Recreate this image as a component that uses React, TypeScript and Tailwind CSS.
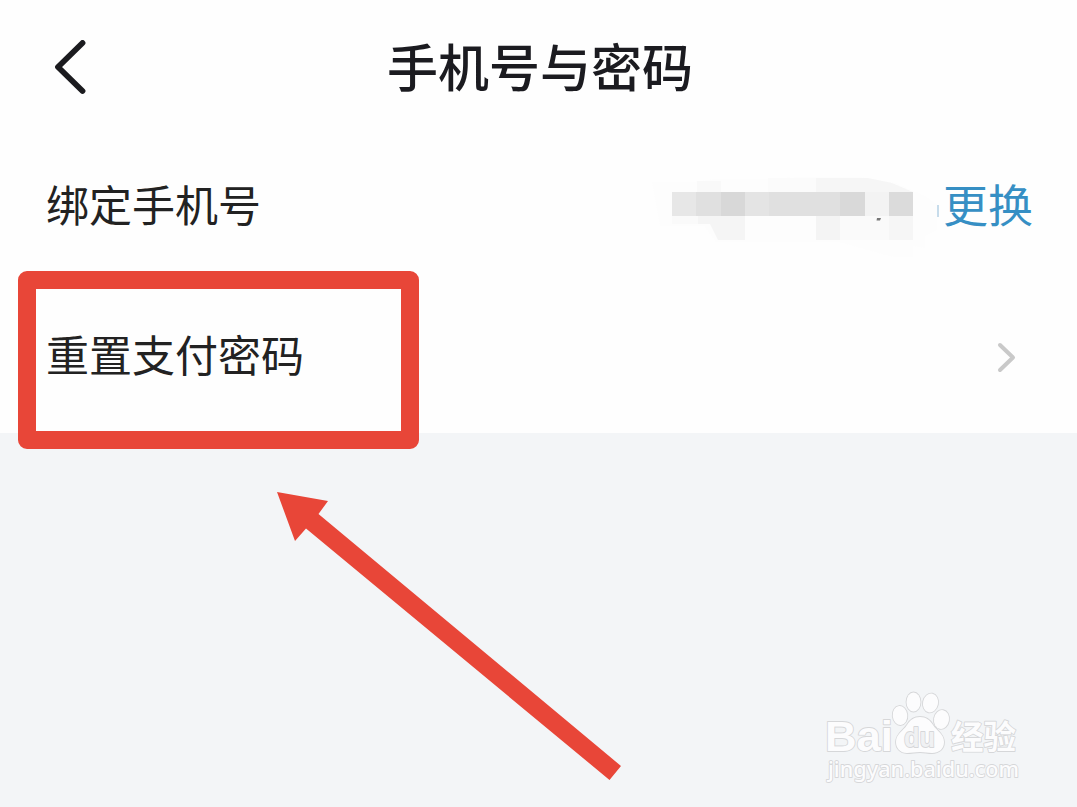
import type {ReactNode} from "react";

function BackIcon() {
  return (
    <svg className="w-8 h-14" viewBox="0 0 32 56" fill="none">
      <path d="M28.5 3 L4 27 L28.5 51" stroke="#1b1b1f" strokeWidth="5.8" strokeLinecap="round" strokeLinejoin="round" />
    </svg>
  );
}

function ForwardIcon() {
  return (
    <svg className="w-5 h-8" viewBox="0 0 20 32" fill="none">
      <path d="M3 4 L16 16.500 L3 29" stroke="#c9c9c9" strokeWidth="4" strokeLinecap="round" strokeLinejoin="round" />
    </svg>
  );
}

// Mosaic drawn over the bound phone number
function MaskedNumber() {
  return (
    <svg className="w-[290px] h-[100px]" viewBox="650 157 290 100" aria-hidden="true">
      <path d="M652 182h42l20-3h46l40-2h60l35 6 28 12 14 9v26l-12 6v12l-12-2v14l-24-4-50-14H716l-12-16h-44z" fill="#fdfdfd" />
      <rect x="697" y="181" width="24" height="11" fill="#f9f9f9" />
      <rect x="768" y="178" width="48" height="14" fill="#fbfbfb" />
      <path d="M816 178h52l24 5 21 9h-97z" fill="#f6f6f6" />
      <rect x="672" y="216" width="26" height="8" fill="#fafafa" />
      <path d="M698 216h47v24h-27l-8-16h-12z" fill="#f5f5f5" />
      <rect x="816" y="216" width="24" height="24" fill="#f4f4f4" />
      <rect x="840" y="216" width="49" height="24" fill="#fafafa" />
      <rect x="889" y="216" width="24" height="24" fill="#f6f6f6" />
      <rect x="672" y="192" width="24" height="24" fill="#e7e7e7" />
      <rect x="696" y="192" width="25" height="24" fill="#e0e0e0" />
      <rect x="721" y="192" width="24" height="24" fill="#d8d8d8" />
      <rect x="745" y="192" width="24" height="24" fill="#e4e4e4" />
      <rect x="769" y="192" width="71" height="24" fill="#e0e0e0" />
      <rect x="840" y="192" width="25" height="24" fill="#d9d9d9" />
      <rect x="865" y="192" width="24" height="24" fill="#f3f3f3" />
      <rect x="889" y="192" width="24" height="24" fill="#dbdbdb" />
      <path d="M877 218h4l-1 2.500h-3.500z" fill="#777" />
      <rect x="937" y="205" width="2" height="12" fill="#c7dceb" />
    </svg>
  );
}

function Row({label, children}: {label: string; children: ReactNode}) {
  return (
    <div className="h-[150px] flex items-center justify-between pl-[46px]">
      <span className="pb-[7px] text-[43px] leading-none text-[#222]">{label}</span>
      {children}
    </div>
  );
}

function Watermark() {
  return (
    <svg
      className="absolute left-[820px] top-[685px] w-[210px] h-[105px]"
      viewBox="820 685 210 105"
      fill="#fcfcfd"
      stroke="#d6d7d9"
      strokeWidth="1.800"
      strokeLinejoin="round"
      paintOrder="stroke"
      fontFamily="'Liberation Sans', sans-serif"
    >
      <text x="825" y="751" fontSize="43" fontWeight="700" textLength="68" lengthAdjust="spacingAndGlyphs">Bai</text>
      <ellipse cx="900" cy="715.500" rx="7.300" ry="9.500" transform="rotate(-6 900 715.500)" />
      <ellipse cx="913.500" cy="702" rx="7" ry="9.500" />
      <ellipse cx="930.500" cy="703" rx="7.500" ry="9.500" transform="rotate(12 930.500 703)" />
      <ellipse cx="941.500" cy="719.500" rx="7.500" ry="9.500" transform="rotate(10 941.500 719.500)" />
      <path d="M920 717c6 0 10 3 13 8 4 6 11 9 11 17 0 7-5 11-12 11-5 0-7-1-12-1s-8 1-13 1c-7 0-11-5-11-11 0-8 7-11 11-17 3-5 7-8 13-8z" />
      <text x="904" y="747" fontSize="28" fontWeight="700" textLength="31" lengthAdjust="spacingAndGlyphs" fill="#f0f1f3">du</text>
      <text x="951" y="749" fontSize="33" fontWeight="700" fontFamily="'Noto Sans CJK SC', sans-serif" textLength="65" lengthAdjust="spacingAndGlyphs">经验</text>
      <text x="828" y="777" fontSize="22" fontWeight="500" fontFamily="'Noto Sans', sans-serif" textLength="191" lengthAdjust="spacingAndGlyphs" strokeWidth="1.800">jingyan.baidu.com</text>
    </svg>
  );
}

export default function App() {
  return (
    <div className="relative w-[1077px] h-[807px] overflow-hidden bg-[#f3f5f7] font-['Noto_Sans_CJK_SC',sans-serif]">
      <div className="bg-[#fefefe] h-[433px]">
        <header className="h-[132px] grid grid-cols-[1fr_auto_1fr] items-center pl-[54px] pr-[51px] pt-1">
          <BackIcon />
          <h1 className="pb-[5px] text-[51px] leading-none font-medium text-[#1b1b20]">手机号与密码</h1>
        </header>
        <Row label="绑定手机号">
          <div className="flex items-center pr-[43px]">
            <MaskedNumber />
            <button className="ml-[3px] mr-px pb-[7px] text-[45px] leading-none text-[#368fc4]">更换</button>
          </div>
        </Row>
        <Row label="重置支付密码">
          <div className="pr-[60px]">
            <ForwardIcon />
          </div>
        </Row>
      </div>

      <div className="absolute left-[18px] top-[271px] w-[401px] h-[178px] rounded-[9px] border-[18px] border-[#e84638]" />
      <svg className="absolute left-[270px] top-[485px] w-[360px] h-[300px]" viewBox="270 485 360 300">
        <path d="M277 492 L328 501 L318.500 514 L621 766 L609.500 780 L306 528.500 L295 541 Z" fill="#e84638" />
      </svg>
      <Watermark />
    </div>
  );
}
